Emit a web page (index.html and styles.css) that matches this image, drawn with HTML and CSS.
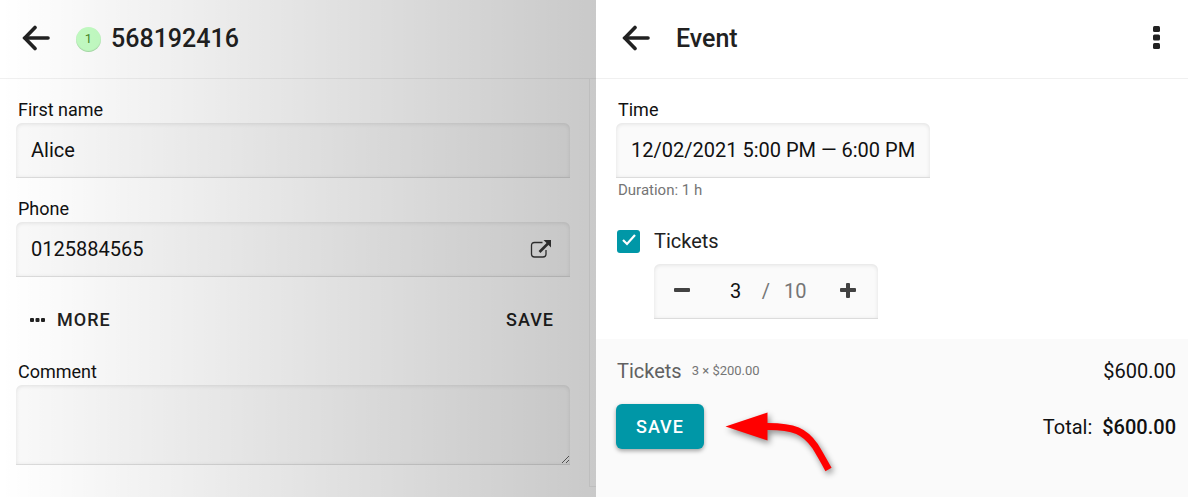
FILE: index.html
```html
<!DOCTYPE html>
<html lang="en">
<head>
    <meta charset="UTF-8">
    <meta name="viewport" content="width=device-width, initial-scale=1.0">
    <title>Event booking</title>
    <link rel="stylesheet" href="styles.css">
</head>
<body>
    <div class="layout">
        <section class="panel client">
            <header class="topbar">
                <button type="button" class="icon-btn" aria-label="Back">
                    <svg width="28" height="26" viewBox="0 0 28 26" fill="none" stroke="#212121" stroke-width="3.600"><path d="M13 2.500 2.800 13 13 23.500" stroke-linecap="round" stroke-linejoin="miter"/><path d="M3 13h23" stroke-linecap="round"/></svg>
                </button>
                <span class="badge">1</span>
                <h1>568192416</h1>
            </header>
            <div class="client-body">
                <form class="form">
                    <div class="field">
                        <label for="first_name">First name</label>
                        <input class="box" type="text" id="first_name" value="Alice">
                    </div>
                    <div class="field">
                        <label for="phone">Phone</label>
                        <div class="box phone-box">
                            <input type="text" id="phone" value="0125884565">
                            <button type="button" class="icon-btn" aria-label="Open phone">
                                <svg width="22" height="20" viewBox="0 0 22 20" fill="none" stroke="#383838"><path d="M12.5 3.500H4.5Q1.500 3.500 1.500 6.500v8.500q0 3 3 3H13q3 0 3-3V11" stroke-width="1.300"/><path d="M9.500 13 18 4.500" stroke-width="2.600"/><path d="M13.500 1H21v7.500z" fill="#383838" stroke="none"/></svg>
                            </button>
                        </div>
                    </div>
                    <div class="actions">
                        <button type="button" class="text-btn">
                            <svg width="15" height="4" viewBox="0 0 15 4" fill="#212121"><rect width="4" height="4" rx="1"/><rect x="5.500" width="4" height="4" rx="1"/><rect x="11" width="4" height="4" rx="1"/></svg>
                            MORE
                        </button>
                        <button type="submit" class="text-btn">SAVE</button>
                    </div>
                    <div class="field">
                        <label for="comment">Comment</label>
                        <textarea class="box" id="comment"></textarea>
                    </div>
                </form>
                <div class="gutter"></div>
            </div>
        </section>

        <section class="panel event">
            <header class="topbar">
                <button type="button" class="icon-btn" aria-label="Back">
                    <svg width="28" height="26" viewBox="0 0 28 26" fill="none" stroke="#212121" stroke-width="3.600"><path d="M13 2.500 2.800 13 13 23.500" stroke-linecap="round" stroke-linejoin="miter"/><path d="M3 13h23" stroke-linecap="round"/></svg>
                </button>
                <h1>Event</h1>
                <button type="button" class="icon-btn menu-btn" aria-label="Menu">
                    <svg width="8" height="24" viewBox="0 0 8 24" fill="#212121"><rect x="1" width="7" height="6" rx="1.500"/><rect x="1" y="8.500" width="7" height="6" rx="1.500"/><rect x="1" y="17" width="7" height="6" rx="1.500"/></svg>
                </button>
            </header>
            <form class="event-form">
                <div class="field">
                    <label for="time">Time</label>
                    <input class="box time-box" type="text" id="time" value="12/02/2021 5:00 PM — 6:00 PM">
                    <p class="hint">Duration: 1 h</p>
                </div>
                <div class="check-row">
                    <input type="checkbox" id="tickets" checked>
                    <label for="tickets">Tickets</label>
                </div>
                <div class="box stepper">
                    <button type="button" class="icon-btn" aria-label="Less">
                        <svg width="16" height="16" viewBox="0 0 16 16" fill="#424242"><rect y="5" width="16" height="4" rx="1"/></svg>
                    </button>
                    <div class="count">
                        <input type="text" id="qty" value="3" aria-label="Number of tickets">
                        <span>/</span>
                        <span>10</span>
                    </div>
                    <button type="button" class="icon-btn" aria-label="More">
                        <svg width="16" height="16" viewBox="0 0 16 16" fill="#424242"><rect y="5" width="16" height="4" rx="1"/><rect x="6" width="4" height="15" rx="1"/></svg>
                    </button>
                </div>
            </form>
            <footer class="summary">
                <div class="summary-row">
                    <span class="item">Tickets <small>3 × $200.00</small></span>
                    <span>$600.00</span>
                </div>
                <div class="summary-row">
                    <div class="save-wrap">
                        <button type="button" class="save-btn">SAVE</button>
                        <svg class="pointer" width="125" height="80" viewBox="0 0 125 80" aria-hidden="true"><path d="M44 22.500C74 22 84 28 94 42q5 8 13.500 23.500" fill="none" stroke="#f00" stroke-width="7"/><path d="M4.500 22.500 46.500 8.500v28z" fill="#f00"/></svg>
                    </div>
                    <span class="total">Total: <strong>$600.00</strong></span>
                </div>
            </footer>
        </section>
    </div>
</body>
</html>
```

FILE: styles.css
```css
* {
    box-sizing: border-box;
}

body {
    margin: 0;
    font-family: Roboto, Arial, sans-serif;
    font-size: 20px;
    line-height: 24px;
    color: #111;
    background-color: #fff;
}

button,
input,
textarea {
    font: inherit;
    color: inherit;
}

.layout {
    display: grid;
    grid-template-columns: calc(50% + 2px) 1fr;
    min-height: 100vh;
}

.panel {
    display: flex;
    flex-direction: column;
    min-width: 0;
}

/* the inactive panel is shaded towards the open one */
.client {
    position: relative;
}

.client::after {
    content: "";
    position: absolute;
    inset: 0;
    background: linear-gradient(to right, rgba(0, 0, 0, 0), rgba(0, 0, 0, 0.21));
    pointer-events: none;
}

.topbar {
    display: flex;
    align-items: center;
    height: 79px;
    padding: 0 28px 0 22px;
    border-bottom: 1px solid #f0f0f0;
}

.event .topbar {
    padding-left: 26px;
}

h1 {
    margin: 0;
    font-size: 25px;
    font-weight: 500;
    line-height: 32px;
    color: #212121;
}

.icon-btn {
    display: flex;
    padding: 0;
    border: none;
    background: none;
    cursor: pointer;
}

.topbar .icon-btn {
    padding-bottom: 2px;
}

.badge {
    display: flex;
    align-items: center;
    justify-content: center;
    width: 25px;
    height: 25px;
    margin: 0 10px 0 26px;
    border-radius: 50%;
    background-color: #c5ffc5;
    box-shadow: inset 0 -1px 1px rgba(0, 0, 0, 0.15);
    font-size: 13px;
    color: #4a8a2a;
}

.event h1 {
    margin-left: 26px;
}

.menu-btn {
    margin-left: auto;
}

.client-body {
    display: flex;
    flex: 1;
}

.form {
    display: flex;
    flex: 1;
    flex-direction: column;
    gap: 20px;
    min-width: 0;
    padding: 20px 19px 20px 16px;
}

.gutter {
    width: 7px;
    margin-bottom: 10px;
    border-left: 1px solid #f0f0f0;
    border-bottom: 1px solid #f0f0f0;
}

.field {
    display: flex;
    flex-direction: column;
}

.field label {
    padding: 0 0 2px 2px;
    font-size: 18px;
    line-height: 22px;
}

.box {
    width: 100%;
    height: 55px;
    padding: 0 15px;
    border: none;
    border-bottom: 1px solid #dcdcdc;
    border-radius: 6px 6px 0 0;
    background-color: #fafafa;
    box-shadow: inset 0 1px 4px rgba(0, 0, 0, 0.1);
    outline: none;
}

.phone-box {
    display: flex;
    align-items: center;
    padding-right: 18px;
}

.phone-box input {
    flex: 1;
    min-width: 0;
    padding: 0;
    border: none;
    background: none;
    outline: none;
}

textarea.box {
    height: 80px;
    padding: 15px;
    resize: vertical;
}

.actions {
    display: flex;
    justify-content: space-between;
    padding: 0 16px 0 14px;
}

.text-btn {
    display: flex;
    align-items: center;
    gap: 12px;
    height: 44px;
    padding: 2px 0 0;
    border: none;
    background: none;
    font-size: 18px;
    font-weight: 500;
    letter-spacing: 1px;
    color: #212121;
    cursor: pointer;
}

.event-form {
    padding: 20px;
}

.time-box {
    width: 314px;
    max-width: 100%;
}

.hint {
    margin: 0;
    padding-left: 2px;
    font-size: 15px;
    color: #757575;
}

.check-row {
    display: flex;
    align-items: center;
    gap: 14px;
    height: 24px;
    margin: 27px 0 11px 1px;
    color: #212121;
}

.check-row input {
    appearance: none;
    width: 23px;
    height: 23px;
    margin: 0;
    border-radius: 3px;
    background: #0097a7 url("data:image/svg+xml,%3Csvg xmlns='http://www.w3.org/2000/svg' viewBox='0 0 23 23'%3E%3Cpath d='M6 10l4 4 8-9' fill='none' stroke='white' stroke-width='2.2'/%3E%3C/svg%3E") center no-repeat;
}

.stepper {
    display: flex;
    align-items: center;
    justify-content: space-between;
    width: 224px;
    margin-left: 38px;
    padding: 0 22px 0 20px;
}

.count {
    display: flex;
    align-items: center;
    gap: 14px;
    color: #757575;
}

.count input {
    width: 24px;
    padding: 0;
    border: none;
    background: none;
    text-align: center;
    color: #111;
    outline: none;
}

.summary {
    flex: 1;
    padding: 20px 12px 20px 20px;
    background-color: #fafafa;
}

.summary-row {
    display: flex;
    align-items: center;
    justify-content: space-between;
}

.summary-row + .summary-row {
    margin-top: 21px;
}

.item {
    display: flex;
    align-items: center;
    gap: 10px;
    padding-left: 1px;
    color: #616161;
}

.item small {
    font-size: 13px;
    color: #757575;
}

.total strong {
    margin-left: 5px;
    font-weight: 500;
}

.save-wrap {
    position: relative;
    display: flex;
}

.save-btn {
    height: 45px;
    padding: 0 20px;
    border: none;
    border-radius: 6px;
    background-color: #0097a7;
    box-shadow: 0 2px 4px rgba(0, 0, 0, 0.35);
    font-size: 18px;
    font-weight: 500;
    letter-spacing: 1px;
    color: #fff;
    cursor: pointer;
}

.pointer {
    position: absolute;
    top: 0;
    left: calc(100% + 17px);
    filter: drop-shadow(2px 3px 3px rgba(0, 0, 0, 0.45));
    pointer-events: none;
}
```
